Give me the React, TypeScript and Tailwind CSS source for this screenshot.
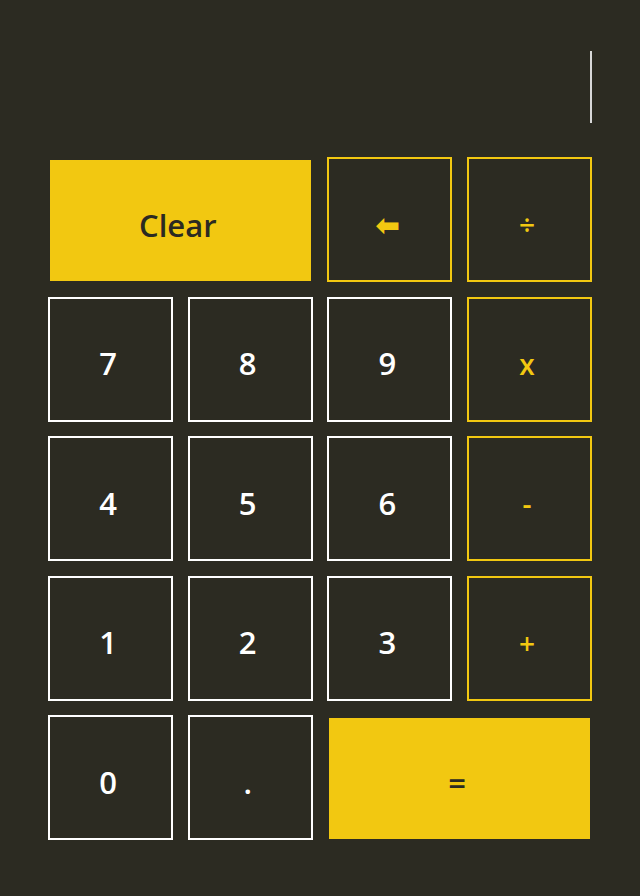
import React from "react";

type Key = {
  label: string;
  kind: "num" | "op" | "fill";
  span?: boolean;
};

const keys: Key[] = [
  { label: "Clear", kind: "fill", span: true },
  { label: "⬅", kind: "op" },
  { label: "÷", kind: "op" },
  { label: "7", kind: "num" },
  { label: "8", kind: "num" },
  { label: "9", kind: "num" },
  { label: "x", kind: "op" },
  { label: "4", kind: "num" },
  { label: "5", kind: "num" },
  { label: "6", kind: "num" },
  { label: "-", kind: "op" },
  { label: "1", kind: "num" },
  { label: "2", kind: "num" },
  { label: "3", kind: "num" },
  { label: "+", kind: "op" },
  { label: "0", kind: "num" },
  { label: ".", kind: "num" },
  { label: "=", kind: "fill", span: true },
];

const styles = {
  num: "border-2 border-white text-white text-[31px]",
  op: "border-2 border-[#f2c811] text-[#f2c811] text-[28px]",
  fill: "mx-[2px] mt-[3px] mb-[1px] bg-[#f2c811] text-[#2b2a22] text-[31px]",
};

const App: React.FC = () => {
  return (
    <div
      className="w-[640px] h-[896px] bg-[#2c2b22] pt-[51px] pl-[48px]"
      style={{ fontFamily: '"Open Sans", "Noto Sans", sans-serif' }}
    >
      {/* display */}
      <div className="w-[544px] h-[72px] flex justify-end">
        <div className="w-[2px] h-full bg-[#d8d8d8]" />
      </div>

      {/* keypad */}
      <div className="mt-[34px] grid grid-cols-[repeat(4,125px)] auto-rows-[125px] gap-x-[14.67px] gap-y-[14.5px]">
        {keys.map((k) => (
          <button
            key={k.label}
            className={`flex items-center justify-center pt-[9px] pr-[5px] font-semibold ${styles[k.kind]} ${
              k.span ? "col-span-2" : ""
            }`}
          >
            {k.label}
          </button>
        ))}
      </div>
    </div>
  );
};

export default App;
